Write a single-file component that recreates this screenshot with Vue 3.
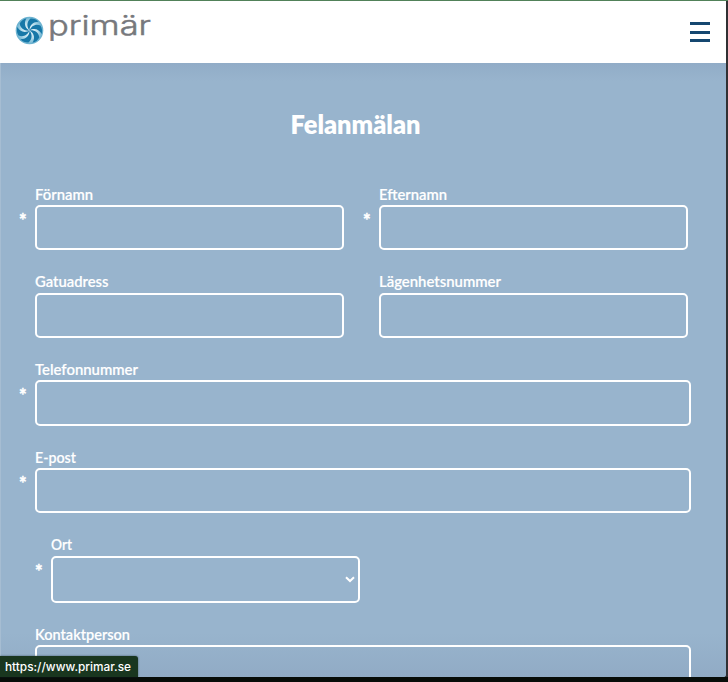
<script setup>
const blades = [10, 70, 130, 190, 250, 310]
const rows = [
  { kind: 'pair', fields: [
    { label: 'Förnamn', required: true, w: 58 },
    { label: 'Efternamn', required: true, w: 68 },
  ] },
  { kind: 'pair raised', fields: [
    { label: 'Gatuadress', w: 73.5 },
    { label: 'Lägenhetsnummer', w: 122 },
  ] },
  { kind: 'full tall', fields: [{ label: 'Telefonnummer', required: true, w: 103 }] },
  { kind: 'full', fields: [{ label: 'E-post', required: true, w: 41 }] },
  { kind: 'select raised', fields: [{ label: 'Ort', required: true, select: true, w: 21 }] },
  { kind: 'full last', fields: [{ label: 'Kontaktperson', w: 95 }] },
]
</script>

<template>
  <div class="window">
    <div class="page">
      <header class="header">
        <svg class="logo" width="140" height="36" viewBox="0 0 140 36">
          <defs>
            <radialGradient id="orb" cx="50%" cy="50%" r="50%">
              <stop offset="0" stop-color="#f4fcff" />
              <stop offset=".6" stop-color="#b4dceb" />
              <stop offset="1" stop-color="#63adcd" />
            </radialGradient>
          </defs>
          <circle cx="14.5" cy="17.5" r="13.8" fill="url(#orb)" />
          <path
            v-for="a in blades"
            :key="a"
            :transform="`translate(14.5 17.5) rotate(${a})`"
            d="M0 0 C-3.5 -3 -4.5 -8 -1 -12 Q3.5 -13 7.5 -10.2 C2.8 -9.6 -1.2 -6 0 0Z"
            fill="#1678a8"
          />
          <text class="wordmark" x="33" y="22" textLength="103" lengthAdjust="spacingAndGlyphs">primär</text>
        </svg>
        <button class="menu" aria-label="Meny"><i></i><i></i><i></i></button>
      </header>
      <main class="content">
        <h1 class="title">
          <svg width="132" height="34"><text x="0.5" y="26.5" textLength="130" lengthAdjust="spacingAndGlyphs">Felanmälan</text></svg>
        </h1>
        <form class="form">
          <div v-for="(row, i) in rows" :key="i" class="row" :class="row.kind">
            <div v-for="f in row.fields" :key="f.label" class="field">
              <svg class="label" width="200" height="20">
                <text x="0" y="15" :textLength="f.w" lengthAdjust="spacingAndGlyphs">{{ f.label }}</text>
              </svg>
              <span v-if="f.required" class="star">*</span>
              <div class="box">
                <svg v-if="f.select" width="10" height="7" viewBox="0 0 10 7">
                  <path d="M1 1.2 L5 5 L9 1.2" fill="none" stroke="#fff" stroke-width="2" />
                </svg>
              </div>
            </div>
          </div>
        </form>
      </main>
    </div>
    <div class="status">
      <svg width="128" height="20"><text x="0" y="14" textLength="126" lengthAdjust="spacingAndGlyphs">https://www.primar.se</text></svg>
    </div>
  </div>
</template>

<style>
body { margin: 0; overflow: hidden; }
</style>

<style scoped>
* { box-sizing: border-box; }
svg { display: block; overflow: visible; }
.window {
  position: relative;
  width: 728px;
  height: 682px;
  padding: 1px 2px 5px 0;
  background: linear-gradient(#518159 0 1px, transparent 1px), linear-gradient(transparent 677px, #080d09 677px), #303033;
}
.page {
  height: 676px;
  overflow: hidden;
  background: #98b4cd;
  border-radius: 0 0 3px 0;
}
.header {
  display: flex;
  justify-content: space-between;
  height: 62px;
  padding: 12px 16px 0 15px;
  background: #fff;
}
.wordmark { font: 300 27px Inter, sans-serif; fill: #77787c; stroke: #77787c; stroke-width: .5px; }
.menu {
  display: flex;
  flex-direction: column;
  gap: 6px;
  width: 20px;
  margin: 9px 0 0;
  padding: 0;
  border: 0;
  background: none;
}
.menu i { width: 20px; height: 3px; background: #154770; }
.menu i:last-child { margin-top: -1px; }
.content {
  height: 614px;
  padding: 44px 35px 0;
  background:
    linear-gradient(90deg, #a6bdd2 0 1px, transparent 1px),
    linear-gradient(#91acc7 0, #98b4cd 18px, #98b4cd 570px, #91abc5 100%);
}
.title { display: flex; justify-content: center; margin: 0 0 44px; padding-right: 15px; width: 656px; }
.title text { font: 800 25.5px Lato, sans-serif; fill: #fff; }
.form { display: flex; flex-direction: column; }
.row { display: flex; height: 88px; gap: 35px; }
.row:nth-child(2) { height: 87px; }
.field { position: relative; width: 309px; }
.full .field { width: 656px; }
.select { padding-left: 16px; height: 89px; }
.label { height: 20px; }
.raised .label { height: 21px; margin-top: -1px; }
.label text { font: 600 14.4px Lato, sans-serif; fill: #fff; stroke: #fff; stroke-width: .15px; }
.box {
  display: flex;
  align-items: center;
  justify-content: flex-end;
  height: 45px;
  padding-right: 3px;
  border: 2px solid #fff;
  border-radius: 5px;
}
.tall .box { height: 46px; }
.select .box { height: 47px; }
.star {
  position: absolute;
  left: -16px;
  top: 25px;
  color: #fff;
  font: 900 18px/20px Lato, sans-serif;
  -webkit-text-stroke: .4px #fff;
}
.status {
  position: absolute;
  left: 0;
  bottom: 5px;
  width: 138px;
  height: 21px;
  padding: 1px 0 0 5px;
  background: #19361f;
  border-radius: 0 3px 0 0;
  box-shadow: 0 0 2px rgba(20, 40, 50, .7);
}
.status text { font: 500 12px Inter, sans-serif; fill: #fff; }
</style>
